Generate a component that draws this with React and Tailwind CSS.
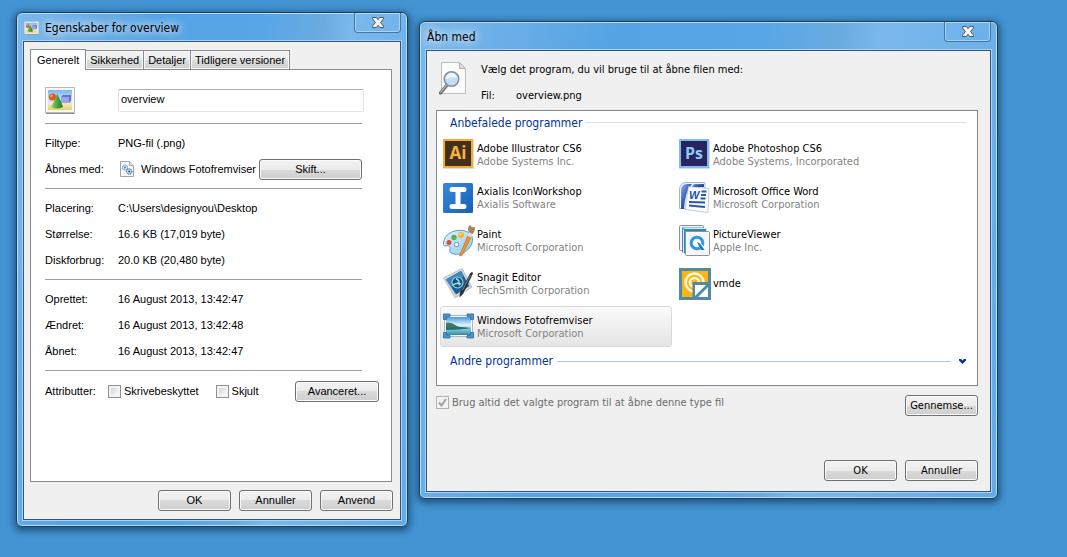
import { useState } from "react";

const tabs = ["Generelt", "Sikkerhed", "Detaljer", "Tidligere versioner"];

const locationRows = [
  ["Placering:", "C:\\Users\\designyou\\Desktop"],
  ["Størrelse:", "16.6 KB (17,019 byte)"],
  ["Diskforbrug:", "20.0 KB (20,480 byte)"],
];

const dateRows = [
  ["Oprettet:", "16 August 2013, 13:42:47"],
  ["Ændret:", "16 August 2013, 13:42:48"],
  ["Åbnet:", "16 August 2013, 13:42:47"],
];

/* ---------- Icons ---------- */

const PictureIcon = ({ className }) => (
  <svg className={className} viewBox="0 0 30 27" aria-hidden="true">
    <defs>
      <linearGradient id="picSky" x1="0" y1="0" x2="0" y2="1">
        <stop offset="0" stopColor="#7fb5ec" />
        <stop offset="0.6" stopColor="#d5ebf7" />
        <stop offset="0.7" stopColor="#f1ebb0" />
        <stop offset="1" stopColor="#e2d273" />
      </linearGradient>
      <linearGradient id="picCone" x1="0" y1="0" x2="1" y2="0">
        <stop offset="0" stopColor="#a3d27c" />
        <stop offset="0.5" stopColor="#4ea43c" />
        <stop offset="1" stopColor="#2a7a24" />
      </linearGradient>
    </defs>
    <rect x="0.5" y="0.5" width="29" height="25" fill="#f7f7f7" stroke="#b9b9b9" />
    <path d="M1 26.5h28.5" stroke="#8f8f8f" />
    <rect x="3" y="3" width="24" height="20" fill="url(#picSky)" />
    <path d="M16 10l2-2h8v6l-2 2h-8z" fill="#6573cf" />
    <path d="M16 10h8v6h-8z" fill="#9aa4ea" />
    <circle cx="7.5" cy="10" r="3.6" fill="#dd5a1c" />
    <circle cx="6.5" cy="8.8" r="1.5" fill="#f19058" />
    <path d="M12 7q3 4 6 13q-6 3-12 0Q9.500 14 12 7z" fill="url(#picCone)" />
  </svg>
);

const GearFileIcon = () => (
  <svg className="size-4" viewBox="0 0 16 16" aria-hidden="true">
    <path d="M1.500 0.500h9l4 4v11h-13z" fill="#fbfbfb" stroke="#a5a5a5" />
    <path d="M10.500 0.500v4h4" fill="#e4e4e4" stroke="#a5a5a5" />
    <circle cx="6" cy="6.500" r="2.600" fill="#d8ecfa" stroke="#4783b4" strokeDasharray="1.400 0.600" />
    <circle cx="6" cy="6.500" r="0.900" fill="#2f6fa8" />
    <circle cx="10.200" cy="10.500" r="2.800" fill="#b9daf1" stroke="#2f6a9d" strokeDasharray="1.400 0.600" />
    <circle cx="10.200" cy="10.500" r="1" fill="#22598c" />
  </svg>
);

const SearchFileIcon = () => (
  <svg className="w-7 h-9 shrink-0" viewBox="0 0 28 36" aria-hidden="true">
    <path d="M2.500 1.500h18l6 6v25h-24z" fill="#fbfbfb" stroke="#bdbdbd" />
    <path d="M20.500 1.500v6h6z" fill="#dedede" stroke="#b0b0b0" />
    <path d="M8 24l-6.500 8" stroke="#6d6d6d" strokeWidth="3.500" strokeLinecap="round" />
    <path d="M7.500 24l-6 7.500" stroke="#c9c9c9" strokeWidth="1.200" />
    <circle cx="12.500" cy="18" r="7.300" fill="#c2def8" stroke="#8b9196" strokeWidth="1.600" />
    <path d="M7 18a5.500 5.500 0 0 1 11-1q-5-2-11 1z" fill="#eef7ff" />
  </svg>
);

const IllustratorIcon = () => (
  <svg className="size-8 shrink-0" viewBox="0 0 32 32" aria-hidden="true">
    <rect x="0" y="1" width="31" height="29" fill="#b9b9b9" opacity="0.5" />
    <rect x="0" y="0" width="30" height="29" fill="#fca929" />
    <rect x="2" y="2" width="26" height="25" fill="#43301b" />
    <text x="15" y="20" textAnchor="middle" fill="#fbb040" fontFamily="Open Sans, sans-serif" fontWeight="700" fontSize="17">Ai</text>
  </svg>
);

const PhotoshopIcon = () => (
  <svg className="size-8 shrink-0" viewBox="0 0 32 32" aria-hidden="true">
    <rect x="0" y="1" width="31" height="29" fill="#b9b9b9" opacity="0.5" />
    <rect x="0" y="0" width="30" height="29" fill="#79bdf3" />
    <rect x="2" y="2" width="26" height="25" fill="#29235f" />
    <text x="15" y="20" textAnchor="middle" fill="#8accf8" fontFamily="Open Sans, sans-serif" fontWeight="700" fontSize="16">Ps</text>
  </svg>
);

const AxialisIcon = () => (
  <svg className="size-8 shrink-0" viewBox="0 0 32 32" aria-hidden="true">
    <defs>
      <linearGradient id="axi" x1="0" y1="0" x2="1" y2="1">
        <stop offset="0" stopColor="#3b8ae0" />
        <stop offset="1" stopColor="#1560b4" />
      </linearGradient>
    </defs>
    <rect x="0" y="1" width="30" height="30" rx="1.500" fill="url(#axi)" />
    <path d="M9 7.500h12M9 24.500h12M15 7.500v17" stroke="#fff" strokeWidth="5" strokeLinecap="round" />
  </svg>
);

const PaintIcon = () => (
  <svg className="size-8 shrink-0" viewBox="0 0 32 32" aria-hidden="true">
    <defs>
      <linearGradient id="palette" x1="0" y1="0" x2="1" y2="1">
        <stop offset="0" stopColor="#e2f4fd" />
        <stop offset="1" stopColor="#8fc8ea" />
      </linearGradient>
    </defs>
    <path d="M14 5.500C6 6.500 0 12.500 0.500 19.500c0.500 3 4 0 6 2s-1 4 1 6c4 3 12 2.500 17-2.500s6.500-11 3.500-15-8-5.200-14-4.500z" fill="url(#palette)" stroke="#5b9bc4" />
    <circle cx="13.500" cy="19.500" r="2.200" fill="#fff" stroke="#5b9bc4" />
    <circle cx="6" cy="17.500" r="2.500" fill="#dd4a3c" />
    <circle cx="11" cy="12.500" r="2.700" fill="#5cb04a" />
    <circle cx="18" cy="10" r="2.900" fill="#f2b328" />
    <circle cx="17.500" cy="9.300" r="1.200" fill="#fbdc84" />
    <path d="M16.500 31l8-20 3.500 1.500-9 18z" fill="#ef9331" stroke="#c26d17" strokeWidth="0.600" />
    <path d="M24.500 11l1.500-4 4 2-2 3.500z" fill="#d9dde0" />
    <path d="M25.500 7Q24 2 27 0q2 3 5 2 0 5-2.500 7z" fill="#b18258" />
  </svg>
);

const SnagitIcon = () => (
  <svg className="size-8 shrink-0" viewBox="0 0 32 32" aria-hidden="true">
    <path d="M0.500 10L18 1q1-0.500 1.500 0.500L29 19 13 29.500q-1 0.500-1.500-0.500z" fill="#d4d8dc" stroke="#a6abb0" strokeWidth="0.700" />
    <path d="M3 11.500L18 3l8.500 15L13 26.500z" fill="#1f5f96" />
    <path d="M3 11.500L18 3l3 5-13 11z" fill="#3f87bd" />
    <circle cx="14.500" cy="14.500" r="5.500" fill="#174f78" stroke="#8ed7e4" strokeWidth="1.100" />
    <path d="M13 10.500q4 2 3 7M10 17q4-3 8-1" stroke="#9ce4ea" strokeWidth="1.400" fill="none" />
    <path d="M27 5.500q2.500-3 3 0L20 26l-3.500 3.500 0.500-5z" fill="#2a3036" />
    <path d="M27.500 7l-8 15" stroke="#858e96" strokeWidth="0.900" />
  </svg>
);

const WordIcon = () => (
  <svg className="size-8 shrink-0" viewBox="0 0 32 32" aria-hidden="true">
    <defs>
      <linearGradient id="word" x1="0" y1="0" x2="1" y2="1">
        <stop offset="0" stopColor="#8fb1e8" />
        <stop offset="0.5" stopColor="#2d5bb2" />
        <stop offset="1" stopColor="#16347d" />
      </linearGradient>
    </defs>
    <path d="M8 0.500h18v26H0.500V8q0-7.500 7.500-7.500z" fill="#f1f6fd" stroke="#9eb4da" />
    <path d="M8.500 2H13Q6 9 5 27H2V9q0-7 6.500-7z" fill="url(#word)" />
    <path d="M15 2h10v3H13z" fill="url(#word)" />
    <path d="M9.500 4.500l20.500 2-1 24-23-3z" fill="#fafcff" stroke="#a9b5c8" strokeWidth="0.700" />
    <text x="10" y="16.500" fill="#2450a8" fontFamily="Liberation Sans, sans-serif" fontStyle="italic" fontWeight="700" fontSize="11">W</text>
    <path d="M22.500 9.500h5M22 13h5M21.500 16.500h5M10 20l16 0.500M10 23.500l16 1.500" stroke="#2d57a8" strokeWidth="1.800" />
  </svg>
);

const PictureViewerIcon = () => (
  <svg className="size-8 shrink-0" viewBox="0 0 32 32" aria-hidden="true">
    <rect x="0.500" y="0.500" width="24" height="25" rx="1" fill="#f1f4f6" stroke="#87929a" />
    <rect x="3" y="2.500" width="22" height="25" fill="#3b8fc4" />
    <rect x="4.500" y="3.500" width="23" height="25" rx="1" fill="#2c87bf" stroke="#e4eaee" />
    <rect x="6.500" y="6.500" width="24" height="24" rx="1" fill="#f5f6f7" stroke="#8b949b" />
    <circle cx="18" cy="18" r="5.800" fill="#fff" stroke="#2b97e6" strokeWidth="3" />
    <path d="M18 17l7 7.500" stroke="#fff" strokeWidth="4" />
    <path d="M18 17l3 1.500 4.500 6.500h-3.500z" fill="#1575c8" />
  </svg>
);

const VmdeIcon = () => (
  <svg className="size-8 shrink-0" viewBox="0 0 32 32" aria-hidden="true">
    <rect width="32" height="32" fill="#4f8ba3" />
    <rect x="3" y="3" width="26" height="26" fill="#fdb515" />
    <circle cx="15.500" cy="14.500" r="9" fill="none" stroke="#fff5db" strokeWidth="2.600" />
    <circle cx="15.500" cy="14.500" r="4.500" fill="none" stroke="#fff5db" strokeWidth="2.600" />
    <path d="M13.500 14h18.500v18H13.500z" fill="#4f8ba3" />
    <path d="M16 17h11L16 28zM29 19v10H19z" fill="#fff" />
  </svg>
);

const PhotoViewerIcon = () => (
  <svg className="size-8 shrink-0" viewBox="0 0 32 32" aria-hidden="true">
    <defs>
      <linearGradient id="lake" x1="0" y1="0" x2="0" y2="1">
        <stop offset="0" stopColor="#4a97e2" />
        <stop offset="0.450" stopColor="#e0f4fc" />
        <stop offset="0.600" stopColor="#9fd4e2" />
        <stop offset="1" stopColor="#2a8da6" />
      </linearGradient>
    </defs>
    <rect x="1.500" y="4.500" width="28" height="21" fill="#fff" stroke="#a9b8c4" />
    <rect x="3" y="6" width="25" height="18" fill="url(#lake)" />
    <path d="M3 12q5-1 9 2t16 3q-12 2-25 1z" fill="#3c7a55" />
    <path d="M3 16.500q10-1 25 0.500-12 2-25 2z" fill="#276d78" />
    <path d="M0.500 8.500V3H7v2.500H3.500v3zM30.500 8.500V3H24v2.500h3.500v3zM0.500 21.500V27H7v-2.500H3.500v-3zM30.500 21.500V27H24v-2.500h3.500v-3z" fill="#4a94cc" stroke="#256aa3" strokeWidth="0.800" />
  </svg>
);

const programs = [
  { name: "Adobe Illustrator CS6", vendor: "Adobe Systems Inc.", Icon: IllustratorIcon },
  { name: "Adobe Photoshop CS6", vendor: "Adobe Systems, Incorporated", Icon: PhotoshopIcon },
  { name: "Axialis IconWorkshop", vendor: "Axialis Software", Icon: AxialisIcon },
  { name: "Microsoft Office Word", vendor: "Microsoft Corporation", Icon: WordIcon },
  { name: "Paint", vendor: "Microsoft Corporation", Icon: PaintIcon },
  { name: "PictureViewer", vendor: "Apple Inc.", Icon: PictureViewerIcon },
  { name: "Snagit Editor", vendor: "TechSmith Corporation", Icon: SnagitIcon },
  { name: "vmde", vendor: "", Icon: VmdeIcon },
  { name: "Windows Fotofremviser", vendor: "Microsoft Corporation", Icon: PhotoViewerIcon },
];

/* ---------- Shared controls ---------- */

const Button = ({ className = "w-[73px]", children }) => (
  <button
    type="button"
    className={`${className} h-[21px] shrink-0 rounded-[3px] border border-[#707070] bg-[linear-gradient(#f3f3f3,#ebebeb_50%,#dadada_50%,#cecece)] text-center leading-[13px] shadow-[inset_0_0_0_1px_#fafafa]`}
  >
    {children}
  </button>
);

const Checkbox = ({ id, label, ...props }) => (
  <label htmlFor={id} className="flex h-[15px] items-center gap-[3px] whitespace-nowrap has-disabled:text-[#6d6d6d]">
    <span className="relative size-[13px]">
      <input
        id={id}
        type="checkbox"
        className="peer block size-[13px] appearance-none border border-[#8e8f8f] bg-[linear-gradient(135deg,#c4c9d0,#f6f6f6_75%)] shadow-[inset_0_0_0_2px_#f4f4f4] disabled:border-[#b1b1b1] disabled:bg-none"
        {...props}
      />
      <svg className="pointer-events-none absolute inset-0 hidden size-[13px] peer-checked:block" viewBox="0 0 13 13" aria-hidden="true">
        <path d="M3 6.500l2.500 3L10 3" fill="none" stroke="#a3a3a3" strokeWidth="2" />
      </svg>
    </span>
    {label}
  </label>
);

const Window = ({ title, icon, children }) => (
  <section className="rounded-[6px] border border-[#1d3f5c] bg-[linear-gradient(100deg,#7cb8ea,#55a3e4_30%,#58a6e8_52%,#6aabdf_64%,#7ab8ec_70%,#62abe8)] px-1.5 pb-1.5 shadow-[inset_0_0_0_1px_#b5dcf8,0_2px_7px_2px_rgba(10,40,75,0.6)]">
    <header className="flex h-7 items-start justify-between">
      <h1 className="flex h-[29px] items-center gap-[6px] pl-px font-['DejaVu_Sans_Condensed','Noto_Sans',sans-serif] text-[12px] leading-4 [text-shadow:0_0_8px_#fff,0_0_12px_#fff]">
        {icon}
        {title}
      </h1>
      <button
        type="button"
        aria-label="Luk"
        className="flex h-5 w-[47px] items-center justify-center rounded-b-[4px] border border-t-0 border-[#4378a6] shadow-[inset_0_-1px_0_#a9d3f5,inset_1px_0_0_#a9d3f5,inset_-1px_0_0_#a9d3f5]"
      >
        <svg className="h-[11px] w-3" viewBox="0 0 12 11" aria-hidden="true">
          <path d="M0.500 0.500h3.800L6 2.700 7.700 0.500h3.800v1.300L8.600 5.500l2.900 3.700v1.300H7.700L6 8.300 4.300 10.500H0.500V9.200L3.400 5.500 0.500 1.800z" fill="#f4f4f4" stroke="#4c5563" />
        </svg>
      </button>
    </header>
    <div className="border border-[#2f567c] bg-[#f0f0f0] shadow-[0_0_0_1px_#a9d3f5]">{children}</div>
  </section>
);

const Divider = () => <hr className="mr-[29px] border-t border-[#a0a0a0]" />;

const DetailRows = ({ rows }) => (
  <dl className="py-1.5">
    {rows.map(([label, value]) => (
      <div key={label} className="flex h-[26px] items-center">
        <dt className="w-[73px]">{label}</dt>
        <dd>{value}</dd>
      </div>
    ))}
  </dl>
);

const GroupHeading = ({ className, lineColor, children, action }) => (
  <div className={`${className} flex items-center pl-[13px] pr-[11px]`}>
    <h2 className="text-[12px] leading-4 text-[#003399]">{children}</h2>
    <span className={`${lineColor} ml-1 h-px grow`} />
    {action}
  </div>
);

/* ---------- Windows ---------- */

const PropertiesWindow = () => {
  const [activeTab, setActiveTab] = useState("Generelt");
  const [fileName, setFileName] = useState("overview");

  return (
    <Window title="Egenskaber for overview" icon={<PictureIcon className="h-[14px] w-[15px]" />}>
      <div className="pb-2 pl-1.5 pr-[7px] pt-[7px] font-['Liberation_Sans',Arial,sans-serif] text-[11px] leading-[13px]">
        <div role="tablist" className="relative -mb-px flex items-end">
          {tabs.map((tab) => (
            <button
              key={tab}
              type="button"
              role="tab"
              aria-selected={tab === activeTab}
              onClick={() => setActiveTab(tab)}
              className={
                tab === activeTab
                  ? "h-[21px] border border-b-0 border-[#898c95] bg-white px-1.5"
                  : "-ml-px mb-px h-[19px] border border-b-0 border-[#898c95] bg-[linear-gradient(#f2f2f2,#ebebeb_50%,#dddddd_50%,#cfcfcf)] px-1 shadow-[inset_0_0_0_1px_#f8f8f8]"
              }
            >
              {tab}
            </button>
          ))}
        </div>

        <div role="tabpanel" className="mr-px min-h-[413px] border border-[#898c95] bg-white pl-[14px]">
          <div className="flex items-center pb-[9px] pr-[27px] pt-[17px]">
            <div className="w-[73px]">
              <PictureIcon className="h-[27px] w-[30px]" />
            </div>
            <input
              aria-label="Filnavn"
              value={fileName}
              onChange={(e) => setFileName(e.target.value)}
              className="h-[23px] min-w-0 grow rounded-[2px] border border-[#e2e3ea] border-t-[#abadb3] px-0.5 pb-1 outline-none"
            />
          </div>

          <Divider />
          <dl className="py-1.5">
            <div className="flex h-[26px] items-center">
              <dt className="w-[73px]">Filtype:</dt>
              <dd>PNG-fil (.png)</dd>
            </div>
            <div className="flex h-[26px] items-center pr-[29px]">
              <dt className="w-[73px]">Åbnes med:</dt>
              <dd className="flex grow items-center gap-1.5 pl-px">
                <GearFileIcon />
                <span className="w-0 grow whitespace-nowrap">Windows Fotofremviser</span>
                <Button className="w-[103px]">Skift...</Button>
              </dd>
            </div>
          </dl>

          <Divider />
          <DetailRows rows={locationRows} />

          <Divider />
          <DetailRows rows={dateRows} />

          <Divider />
          <div className="flex items-center pr-3 pt-2.5">
            <span className="w-[63px] shrink-0">Attributter:</span>
            <div className="flex grow gap-[17px]">
              <Checkbox id="readonly" label="Skrivebeskyttet" />
              <Checkbox id="hidden" label="Skjult" />
            </div>
            <Button className="w-[84px]">Avanceret...</Button>
          </div>
        </div>

        <div className="flex justify-end gap-2 pt-2">
          <Button>OK</Button>
          <Button>Annuller</Button>
          <Button>Anvend</Button>
        </div>
      </div>
    </Window>
  );
};

const OpenWithWindow = () => {
  const [selected, setSelected] = useState("Windows Fotofremviser");

  return (
    <Window title="Åbn med">
      <div className="pb-2.5 pl-[9px] pr-3 pt-[5px] font-['DejaVu_Sans_Condensed','Noto_Sans',sans-serif] text-[11px] leading-[13px]">
        <div className="flex items-start gap-[14px] pb-0.5 pl-[3px]">
          <div className="pt-[5px]">
            <SearchFileIcon />
          </div>
          <div>
            <p className="flex h-[26px] items-center">Vælg det program, du vil bruge til at åbne filen med:</p>
            <p className="flex h-[26px] items-center">
              <span className="w-[35px]">Fil:</span>
              <span>overview.png</span>
            </p>
          </div>
        </div>

        <div className="border border-[#828790] bg-white pb-2.5">
          <GroupHeading className="h-[23px]" lineColor="bg-[#d3dfee]">
            Anbefalede programmer
          </GroupHeading>

          <ul className="grid grid-cols-2 gap-x-1 gap-y-0.5 pl-[3px] pr-[69px]">
            {programs.map(({ name, vendor, Icon }) => (
              <li key={name}>
                <button
                  type="button"
                  onClick={() => setSelected(name)}
                  className={`flex h-[41px] w-full items-center gap-0.5 rounded-[3px] border pl-0.5 text-left ${
                    name === selected
                      ? "border-[#d9d9d9] bg-[linear-gradient(#fafafa,#e5e5e5)]"
                      : "border-transparent"
                  }`}
                >
                  <Icon />
                  <span className="flex flex-col whitespace-nowrap">
                    <span>{name}</span>
                    {vendor && <span className="text-[#838383]">{vendor}</span>}
                  </span>
                </button>
              </li>
            ))}
          </ul>

          <GroupHeading
            className="h-7"
            lineColor="bg-[#b0c4e6]"
            action={
              <button type="button" aria-label="Vis andre programmer" className="pl-2">
                <svg className="h-[5px] w-[7px]" viewBox="0 0 7 5" aria-hidden="true">
                  <path d="M0 0h2l1.500 1.500L5 0h2v1.500L3.500 5 0 1.500z" fill="#003399" />
                </svg>
              </button>
            }
          >
            Andre programmer
          </GroupHeading>
        </div>

        <div className="flex items-start justify-between pt-[9px]">
          <Checkbox id="always" label="Brug altid det valgte program til at åbne denne type fil" checked disabled readOnly />
          <Button>Gennemse...</Button>
        </div>

        <div className="flex justify-end gap-2 pt-11">
          <Button>OK</Button>
          <Button>Annuller</Button>
        </div>
      </div>
    </Window>
  );
};

const App = () => (
  <main className="grid min-h-screen grid-cols-[392fr_579fr] items-start gap-[11px] bg-[#4394d2] pb-7 pl-4 pr-[69px] pt-3 text-black">
    <PropertiesWindow />
    <div className="pt-[9px]">
      <OpenWithWindow />
    </div>
  </main>
);

export default App;
